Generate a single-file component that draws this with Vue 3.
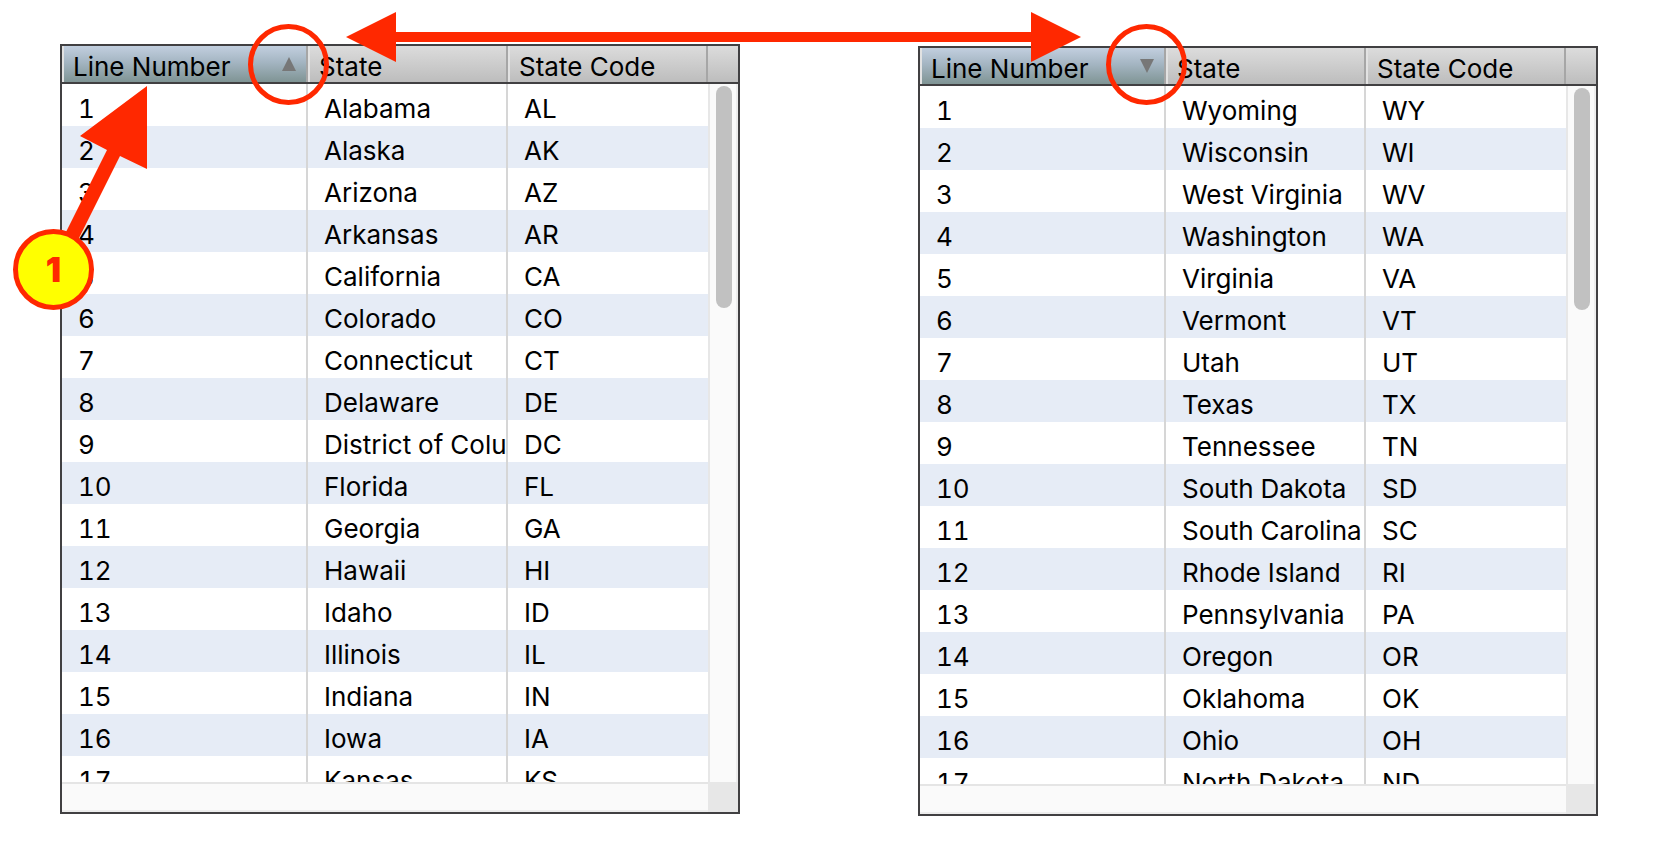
<script setup>
const toRows = (list) =>
  list.split(',').map((entry, i) => {
    const [name, code] = entry.split(':')
    return { line: i + 1, name, code }
  })

const lists = [
  {
    id: 'ascending',
    points: '7,0 14,14 0,14',
    sort: 'ascending',
    rows: toRows(
      'Alabama:AL,Alaska:AK,Arizona:AZ,Arkansas:AR,California:CA,Colorado:CO,Connecticut:CT,Delaware:DE,District of Columbia:DC,Florida:FL,Georgia:GA,Hawaii:HI,Idaho:ID,Illinois:IL,Indiana:IN,Iowa:IA,Kansas:KS'
    )
  },
  {
    id: 'descending',
    points: '0,0 14,0 7,14',
    sort: 'descending',
    rows: toRows(
      'Wyoming:WY,Wisconsin:WI,West Virginia:WV,Washington:WA,Virginia:VA,Vermont:VT,Utah:UT,Texas:TX,Tennessee:TN,South Dakota:SD,South Carolina:SC,Rhode Island:RI,Pennsylvania:PA,Oregon:OR,Oklahoma:OK,Ohio:OH,North Dakota:ND'
    )
  }
]
</script>

<template>
  <main class="figure">
    <section v-for="list in lists" :key="list.id" class="slot">
      <div class="panel" :class="list.id">
        <div class="view">
          <div class="scroller">
            <table>
              <colgroup>
                <col />
                <col class="fixed" />
                <col class="fixed" />
              </colgroup>
              <thead>
                <tr>
                  <th class="sorted" scope="col" :aria-sort="list.sort">
                    <button type="button">
                      <span>Line Number</span>
                      <svg width="14" height="14" viewBox="0 0 14 14" aria-hidden="true">
                        <polygon :points="list.points" fill="#777" />
                      </svg>
                    </button>
                  </th>
                  <th scope="col"><button type="button"><span>State</span></button></th>
                  <th scope="col"><button type="button"><span>State Code</span></button></th>
                </tr>
              </thead>
              <tbody>
                <tr v-for="row in list.rows" :key="row.code">
                  <td>{{ row.line }}</td>
                  <td>{{ row.name }}</td>
                  <td>{{ row.code }}</td>
                </tr>
              </tbody>
            </table>
          </div>
          <div class="side">
            <div class="cap"></div>
            <div class="track"><div class="thumb"></div></div>
          </div>
        </div>
        <div class="bottom">
          <div class="htrack"></div>
          <div class="corner"></div>
        </div>
      </div>
      <div class="ring"></div>
    </section>

    <div class="span-arrow">
      <svg width="50" height="50" viewBox="0 0 50 50"><polygon points="0,25 50,0 50,50" fill="#ff2800" /></svg>
      <div class="shaft"></div>
      <svg width="50" height="50" viewBox="0 0 50 50"><polygon points="50,25 0,0 0,50" fill="#ff2800" /></svg>
    </div>

    <svg class="pointer" width="100" height="160" viewBox="50 84 100 160" aria-hidden="true">
      <polygon points="147,86 80,136 107,150 64,236 77,242 120,156 147,169" fill="#ff2800" />
    </svg>
    <div class="badge">1</div>
  </main>
</template>

<style>
body {
  margin: 0;
  background: #fff;
}
</style>

<style scoped>
.figure {
  position: relative;
  box-sizing: border-box;
  min-height: 100vh;
  padding: 44px 56px 38px 60px;
  display: grid;
  grid-template-columns: 1fr 1fr;
  gap: 178px;
  overflow: hidden;
  font-family: Inter, "Liberation Sans", sans-serif;
  font-size: 26px;
  color: #000;
}
.slot {
  position: relative;
  display: flex;
  min-width: 0;
}
.panel {
  flex: 1;
  min-width: 0;
  display: flex;
  flex-direction: column;
  border: 2px solid #414042;
}
.ascending {
  margin-bottom: 2px;
}
.descending {
  margin-top: 2px;
}
.view {
  flex: 1 1 0;
  min-height: 0;
  display: grid;
  grid-template-columns: 1fr 30px;
  grid-template-rows: minmax(0, 1fr);
}
.scroller {
  overflow: hidden;
}
table {
  width: 100%;
  table-layout: fixed;
  border-collapse: separate;
  border-spacing: 0;
}
.fixed {
  width: 200px;
}
th {
  height: 36px;
  padding: 0;
  border-bottom: 2px solid #414042;
  background: linear-gradient(#dcdcdc, #bdbdbd);
  font-weight: 400;
}
th.sorted {
  background: linear-gradient(#c2cfdf, #a4b5c2 45%, #7f9494);
}
th button {
  box-sizing: border-box;
  width: 100%;
  height: 36px;
  display: flex;
  align-items: center;
  justify-content: space-between;
  padding: 0 10px 0 9px;
  border: solid;
  border-width: 0 2px;
  border-color: transparent #a6a6a6 transparent #e2e2e2;
  background: none;
  font: inherit;
  color: inherit;
}
th span {
  padding-top: 6px;
  line-height: 30px;
  white-space: nowrap;
}
td {
  box-sizing: border-box;
  height: 42px;
  padding: 8px 0 0 16px;
  line-height: 34px;
  border-right: 2px solid #d6d6d6;
  font-variant-numeric: tabular-nums;
  white-space: nowrap;
  overflow: hidden;
}
td:last-child {
  border-right: 0;
}
tbody tr:nth-child(even) {
  background: #e6ecf6;
}
.side {
  display: flex;
  flex-direction: column;
}
.cap {
  height: 36px;
  border-bottom: 2px solid #414042;
  background: linear-gradient(#dcdcdc, #bdbdbd);
}
.track {
  flex: 1;
  padding: 2px 4px 0 6px;
  border-left: 2px solid #e7e7e7;
  border-right: 2px solid #ededed;
  background: #fafafa;
}
.thumb {
  width: 16px;
  height: 222px;
  border-radius: 8px;
  background: #c1c1c1;
}
.bottom {
  height: 30px;
  display: grid;
  grid-template-columns: 1fr 30px;
}
.htrack {
  border-top: 2px solid #e5e5e5;
  border-bottom: 2px solid #ededed;
  background: #fafafa;
}
.corner {
  background: #e7e7e7;
}
.ring {
  position: absolute;
  top: -20px;
  right: 411px;
  box-sizing: border-box;
  width: 81px;
  height: 81px;
  border: 5px solid #ff2800;
  border-radius: 50%;
  pointer-events: none;
}
.span-arrow {
  position: absolute;
  top: 12px;
  left: calc(50% - 481px);
  right: 573px;
  display: flex;
  align-items: center;
  pointer-events: none;
}
.shaft {
  flex: 1;
  height: 10px;
  background: #ff2800;
}
.pointer {
  position: absolute;
  top: 84px;
  left: 50px;
  pointer-events: none;
}
.badge {
  position: absolute;
  top: 229px;
  left: 13px;
  box-sizing: border-box;
  width: 81px;
  height: 81px;
  border: 5px solid #ff2800;
  border-radius: 50%;
  background: #ffff00;
  color: #ff2800;
  font-size: 34px;
  font-weight: 900;
  line-height: 71px;
  text-align: center;
}
</style>
